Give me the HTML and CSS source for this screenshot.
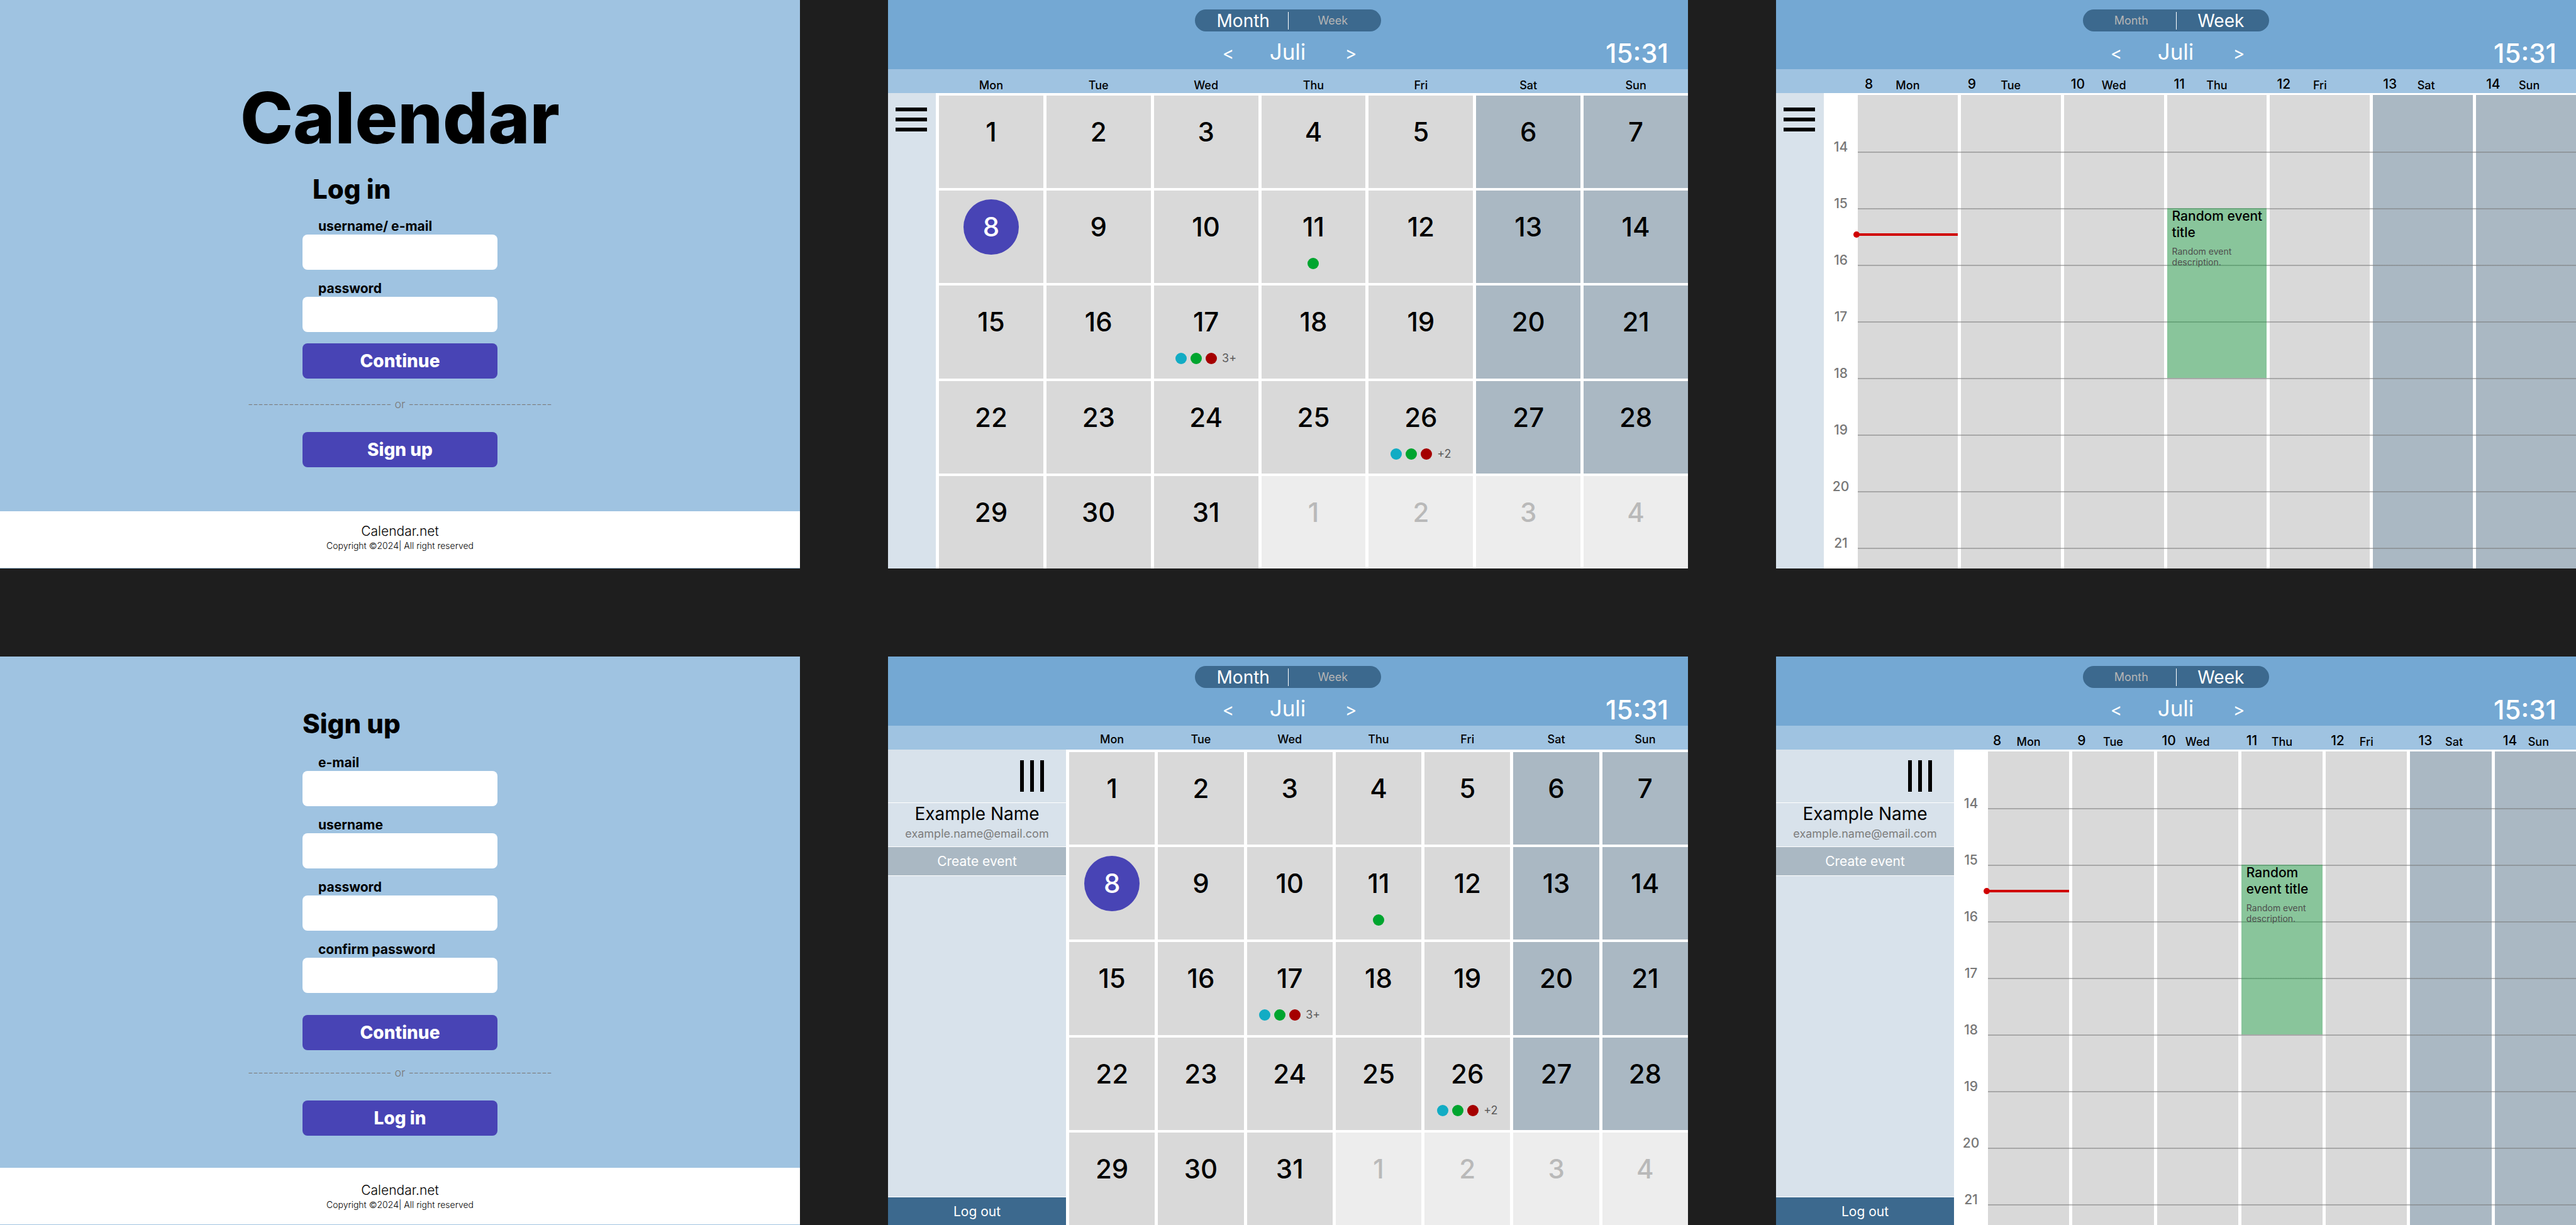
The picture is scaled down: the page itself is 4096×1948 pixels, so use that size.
FILE: index.html
```html
<!DOCTYPE html>
<html lang="en">
<head>
<meta charset="utf-8">
<meta name="viewport" content="width=device-width, initial-scale=1">
<title>Calendar</title>
<link rel="stylesheet" href="styles.css">
</head>
<body>
<main class="board">

  <section class="screen auth auth-login">
    <div class="auth-main">
      <h1 class="brand">Calendar</h1>
      <form class="auth-form">
        <h2 class="form-title form-title-inset">Log in</h2>
        <div class="field">
          <label for="login-user">username/ e-mail</label>
          <input id="login-user" type="text">
        </div>
        <div class="field">
          <label for="login-pass">password</label>
          <input id="login-pass" type="password">
        </div>
        <button class="btn" type="submit">Continue</button>
        <p class="divider">---------------------------- or ----------------------------</p>
        <button class="btn" type="button">Sign up</button>
      </form>
    </div>
    <footer class="auth-footer">
      <p class="site">Calendar.net</p>
      <p class="legal">Copyright ©2024| All right reserved</p>
    </footer>
  </section>

  <section class="screen planner">
    <header class="top">
      <div class="toggle">
        <button type="button" class="active">Month</button>
        <span class="toggle-rule"></span>
        <button type="button">Week</button>
      </div>
      <div class="top-row">
        <div class="month-nav">
          <button type="button" aria-label="Previous month">&lt;</button>
          <span class="month-name">Juli</span>
          <button type="button" aria-label="Next month">&gt;</button>
        </div>
        <time class="clock">15:31</time>
      </div>
    </header>
    <div class="body">
      <aside class="side">
        <button type="button" class="menu" aria-label="Open menu">
          <svg width="50" height="38" viewBox="0 0 50 38"><rect width="50" height="6"/><rect y="16" width="50" height="6"/><rect y="32" width="50" height="6"/></svg>
        </button>
      </aside>
      <table class="month">
        <thead><tr><th>Mon</th><th>Tue</th><th>Wed</th><th>Thu</th><th>Fri</th><th>Sat</th><th>Sun</th></tr></thead>
        <tbody>
          <tr><td><b>1</b></td><td><b>2</b></td><td><b>3</b></td><td><b>4</b></td><td><b>5</b></td><td class="we"><b>6</b></td><td class="we"><b>7</b></td></tr>
          <tr><td><b class="today">8</b></td><td><b>9</b></td><td><b>10</b></td><td><b>11</b><div class="dots"><i class="green"></i></div></td><td><b>12</b></td><td class="we"><b>13</b></td><td class="we"><b>14</b></td></tr>
          <tr><td><b>15</b></td><td><b>16</b></td><td><b>17</b><div class="dots"><i class="cyan"></i><i class="green"></i><i class="red"></i><span>3+</span></div></td><td><b>18</b></td><td><b>19</b></td><td class="we"><b>20</b></td><td class="we"><b>21</b></td></tr>
          <tr><td><b>22</b></td><td><b>23</b></td><td><b>24</b></td><td><b>25</b></td><td><b>26</b><div class="dots"><i class="cyan"></i><i class="green"></i><i class="red"></i><span>+2</span></div></td><td class="we"><b>27</b></td><td class="we"><b>28</b></td></tr>
          <tr><td><b>29</b></td><td><b>30</b></td><td><b>31</b></td><td class="next"><b>1</b></td><td class="next"><b>2</b></td><td class="next"><b>3</b></td><td class="next"><b>4</b></td></tr>
        </tbody>
      </table>
    </div>
  </section>

  <section class="screen planner">
    <header class="top">
      <div class="toggle">
        <button type="button">Month</button>
        <span class="toggle-rule"></span>
        <button type="button" class="active">Week</button>
      </div>
      <div class="top-row">
        <div class="month-nav">
          <button type="button" aria-label="Previous month">&lt;</button>
          <span class="month-name">Juli</span>
          <button type="button" aria-label="Next month">&gt;</button>
        </div>
        <time class="clock">15:31</time>
      </div>
    </header>
    <div class="body">
      <aside class="side">
        <button type="button" class="menu" aria-label="Open menu">
          <svg width="50" height="38" viewBox="0 0 50 38"><rect width="50" height="6"/><rect y="16" width="50" height="6"/><rect y="32" width="50" height="6"/></svg>
        </button>
      </aside>
      <div class="week">
        <div class="week-head">
          <div><b>8</b><span>Mon</span></div>
          <div><b>9</b><span>Tue</span></div>
          <div><b>10</b><span>Wed</span></div>
          <div><b>11</b><span>Thu</span></div>
          <div><b>12</b><span>Fri</span></div>
          <div class="we"><b>13</b><span>Sat</span></div>
          <div class="we"><b>14</b><span>Sun</span></div>
        </div>
        <div class="week-body">
          <ol class="hours"><li>14</li><li>15</li><li>16</li><li>17</li><li>18</li><li>19</li><li>20</li><li>21</li></ol>
          <div class="days">
            <div class="day"><div class="now"></div></div>
            <div class="day"></div>
            <div class="day"></div>
            <div class="day">
              <article class="event"><h3>Random event title</h3><p>Random event description.</p></article>
            </div>
            <div class="day"></div>
            <div class="day we"></div>
            <div class="day we"></div>
          </div>
        </div>
      </div>
    </div>
  </section>

  <section class="screen auth auth-signup">
    <div class="auth-main">
      <form class="auth-form">
        <h2 class="form-title">Sign up</h2>
        <div class="field">
          <label for="su-email">e-mail</label>
          <input id="su-email" type="email">
        </div>
        <div class="field">
          <label for="su-user">username</label>
          <input id="su-user" type="text">
        </div>
        <div class="field">
          <label for="su-pass">password</label>
          <input id="su-pass" type="password">
        </div>
        <div class="field">
          <label for="su-confirm">confirm password</label>
          <input id="su-confirm" type="password">
        </div>
        <button class="btn" type="submit">Continue</button>
        <p class="divider">---------------------------- or ----------------------------</p>
        <button class="btn" type="button">Log in</button>
      </form>
    </div>
    <footer class="auth-footer">
      <p class="site">Calendar.net</p>
      <p class="legal">Copyright ©2024| All right reserved</p>
    </footer>
  </section>

  <section class="screen planner open">
    <header class="top">
      <div class="toggle">
        <button type="button" class="active">Month</button>
        <span class="toggle-rule"></span>
        <button type="button">Week</button>
      </div>
      <div class="top-row">
        <div class="month-nav">
          <button type="button" aria-label="Previous month">&lt;</button>
          <span class="month-name">Juli</span>
          <button type="button" aria-label="Next month">&gt;</button>
        </div>
        <time class="clock">15:31</time>
      </div>
    </header>
    <div class="body">
      <aside class="side">
        <button type="button" class="menu" aria-label="Close menu">
          <svg width="38" height="50" viewBox="0 0 38 50"><rect width="6" height="50"/><rect x="16" width="6" height="50"/><rect x="32" width="6" height="50"/></svg>
        </button>
        <div class="profile">
          <p class="name">Example Name</p>
          <p class="mail">example.name@email.com</p>
        </div>
        <button type="button" class="create">Create event</button>
        <button type="button" class="logout">Log out</button>
      </aside>
      <table class="month">
        <thead><tr><th>Mon</th><th>Tue</th><th>Wed</th><th>Thu</th><th>Fri</th><th>Sat</th><th>Sun</th></tr></thead>
        <tbody>
          <tr><td><b>1</b></td><td><b>2</b></td><td><b>3</b></td><td><b>4</b></td><td><b>5</b></td><td class="we"><b>6</b></td><td class="we"><b>7</b></td></tr>
          <tr><td><b class="today">8</b></td><td><b>9</b></td><td><b>10</b></td><td><b>11</b><div class="dots"><i class="green"></i></div></td><td><b>12</b></td><td class="we"><b>13</b></td><td class="we"><b>14</b></td></tr>
          <tr><td><b>15</b></td><td><b>16</b></td><td><b>17</b><div class="dots"><i class="cyan"></i><i class="green"></i><i class="red"></i><span>3+</span></div></td><td><b>18</b></td><td><b>19</b></td><td class="we"><b>20</b></td><td class="we"><b>21</b></td></tr>
          <tr><td><b>22</b></td><td><b>23</b></td><td><b>24</b></td><td><b>25</b></td><td><b>26</b><div class="dots"><i class="cyan"></i><i class="green"></i><i class="red"></i><span>+2</span></div></td><td class="we"><b>27</b></td><td class="we"><b>28</b></td></tr>
          <tr><td><b>29</b></td><td><b>30</b></td><td><b>31</b></td><td class="next"><b>1</b></td><td class="next"><b>2</b></td><td class="next"><b>3</b></td><td class="next"><b>4</b></td></tr>
        </tbody>
      </table>
    </div>
  </section>

  <section class="screen planner open">
    <header class="top">
      <div class="toggle">
        <button type="button">Month</button>
        <span class="toggle-rule"></span>
        <button type="button" class="active">Week</button>
      </div>
      <div class="top-row">
        <div class="month-nav">
          <button type="button" aria-label="Previous month">&lt;</button>
          <span class="month-name">Juli</span>
          <button type="button" aria-label="Next month">&gt;</button>
        </div>
        <time class="clock">15:31</time>
      </div>
    </header>
    <div class="body">
      <aside class="side">
        <button type="button" class="menu" aria-label="Close menu">
          <svg width="38" height="50" viewBox="0 0 38 50"><rect width="6" height="50"/><rect x="16" width="6" height="50"/><rect x="32" width="6" height="50"/></svg>
        </button>
        <div class="profile">
          <p class="name">Example Name</p>
          <p class="mail">example.name@email.com</p>
        </div>
        <button type="button" class="create">Create event</button>
        <button type="button" class="logout">Log out</button>
      </aside>
      <div class="week">
        <div class="week-head">
          <div><b>8</b><span>Mon</span></div>
          <div><b>9</b><span>Tue</span></div>
          <div><b>10</b><span>Wed</span></div>
          <div><b>11</b><span>Thu</span></div>
          <div><b>12</b><span>Fri</span></div>
          <div class="we"><b>13</b><span>Sat</span></div>
          <div class="we"><b>14</b><span>Sun</span></div>
        </div>
        <div class="week-body">
          <ol class="hours"><li>14</li><li>15</li><li>16</li><li>17</li><li>18</li><li>19</li><li>20</li><li>21</li></ol>
          <div class="days">
            <div class="day"><div class="now"></div></div>
            <div class="day"></div>
            <div class="day"></div>
            <div class="day">
              <article class="event"><h3>Random event title</h3><p>Random event description.</p></article>
            </div>
            <div class="day"></div>
            <div class="day we"></div>
            <div class="day we"></div>
          </div>
        </div>
      </div>
    </div>
  </section>

</main>
</body>
</html>
```
FILE: styles.css
```css
:root {
  --backdrop: #1e1e1e;
  --header: #74a8d3;
  --band: #9fc3e1;
  --side: #d8e2eb;
  --deep: #3c698e;
  --accent: #4844b5;
  --cell: #d9d9d9;
  --weekend: #aab8c3;
}

* { box-sizing: border-box; }

body {
  margin: 0;
  background: var(--backdrop);
  color: #000;
  font-family: Inter, "Liberation Sans", sans-serif;
  font-weight: 400;
}

h1, h2, h3, p, ol { margin: 0; padding: 0; }

button {
  margin: 0;
  padding: 0;
  border: 0;
  background: none;
  color: inherit;
  font: inherit;
}

.board {
  display: grid;
  grid-template-columns: repeat(3, minmax(0, 1fr));
  grid-auto-rows: 1fr;
  gap: 140px;
  min-height: 100vh;
}

.screen {
  display: flex;
  flex-direction: column;
  overflow: hidden;
}

/* Log in and sign up */

.auth { background: var(--band); }

.auth-main {
  flex: 1;
  display: flex;
  flex-direction: column;
  align-items: center;
}

.auth-login .auth-main { padding-top: 119px; }
.auth-signup .auth-main { padding-top: 82px; }

.brand {
  margin-bottom: 21px;
  font-size: 113px;
  line-height: 136px;
  font-weight: 800;
}

.auth-form {
  display: flex;
  flex-direction: column;
  width: 310px;
}

.form-title {
  margin-bottom: 24px;
  font-size: 42px;
  line-height: 50px;
  font-weight: 800;
}

.form-title-inset {
  margin-bottom: 21px;
  padding-left: 16px;
}

.field {
  display: flex;
  flex-direction: column;
  margin-bottom: 17px;
}

.field label {
  padding-left: 25px;
  font-size: 21px;
  line-height: 26px;
  font-weight: 700;
}

.field input {
  height: 56px;
  padding: 0 16px;
  border: 0;
  border-radius: 8px;
  background: #fff;
  font: inherit;
  font-size: 21px;
}

.btn {
  height: 56px;
  margin-top: 1px;
  border-radius: 8px;
  background: var(--accent);
  color: #fff;
  font-size: 28px;
  font-weight: 800;
}

.auth-signup .field + .btn { margin-top: 18px; }

.divider {
  align-self: center;
  margin: 30px 0 32px;
  color: #7a7a7a;
  font-size: 18px;
  line-height: 22px;
  font-weight: 300;
  white-space: nowrap;
}

.auth-signup .divider { margin-top: 25px; }

.auth-footer {
  height: 90px;
  margin-bottom: 1px;
  padding-top: 19px;
  background: #fff;
  text-align: center;
  font-weight: 300;
}

.auth-signup .auth-footer { padding-top: 23px; }

.site {
  font-size: 21px;
  line-height: 26px;
}

.legal {
  font-size: 14px;
  line-height: 20px;
}

/* Planner header */

.planner { background: #fff; }

.top {
  padding-top: 15px;
  background: var(--header);
  color: #fff;
}

.toggle {
  display: grid;
  grid-template-columns: 1fr 1px 1fr;
  align-items: center;
  width: 296px;
  height: 35px;
  margin: 0 auto 10px;
  padding: 0 6px;
  border-radius: 18px;
  background: var(--deep);
}

.toggle button {
  color: #b5b5b5;
  font-size: 18px;
  line-height: 34px;
}

.toggle .active {
  color: #fff;
  font-size: 28px;
}

.toggle-rule {
  height: 28px;
  background: #fff;
}

.top-row {
  display: grid;
  grid-template-columns: 1fr 228px 1fr;
  align-items: center;
}

.month-nav {
  display: flex;
  grid-column: 2;
  justify-content: space-between;
  align-items: baseline;
  padding: 0 0 4px 5px;
  line-height: 42px;
}

.month-nav button {
  width: 28px;
  font-size: 28px;
}

.month-name {
  padding-right: 6px;
  font-size: 35px;
}

.clock {
  justify-self: end;
  padding-right: 31px;
  font-size: 42px;
  line-height: 50px;
  font-weight: 500;
}

/* Side panel */

.body {
  flex: 1;
  display: flex;
  background: var(--band);
}

.side {
  display: flex;
  flex-direction: column;
  flex: none;
  width: 76px;
  margin-top: 38px;
  background: var(--side);
}

.menu {
  display: flex;
  padding: 23px 0 0 12px;
}

.menu svg { display: block; }

.open .side { width: 283px; }

.open .menu {
  justify-content: flex-end;
  height: 85px;
  padding: 17px 35px 0 0;
  border-bottom: 1px solid #fff;
}

.profile {
  height: 70px;
  border-bottom: 1px solid #fff;
  text-align: center;
}

.name {
  margin-bottom: 4px;
  font-size: 28px;
  line-height: 34px;
}

.mail {
  color: #7d7d7d;
  font-size: 18px;
  line-height: 22px;
}

.create,
.logout {
  color: #fff;
  font-size: 21px;
}

.create {
  height: 46px;
  border-bottom: 1px solid #fff;
  background: var(--weekend);
}

.logout {
  height: 45px;
  margin-top: auto;
  border-top: 1px solid #fff;
  background: var(--deep);
}

/* Month view */

.month {
  flex: 1;
  display: flex;
  flex-direction: column;
}

.month thead { display: block; }

.month thead tr {
  display: grid;
  grid-template-columns: repeat(7, 1fr);
  gap: 5px;
  align-items: end;
  height: 38px;
  padding: 0 0 1px 5px;
}

.open .month thead tr { padding-bottom: 5px; }

.month th {
  padding: 0;
  font-size: 18px;
  line-height: 22px;
  font-weight: 500;
}

.month tbody {
  flex: 1;
  display: grid;
  grid-template-columns: repeat(7, 1fr);
  grid-template-rows: repeat(5, 1fr);
  gap: 4px 5px;
  padding: 4px 0 0 5px;
  background: #fff;
}

.month tbody tr { display: contents; }

.month td {
  display: flex;
  flex-direction: column;
  align-items: center;
  padding: 14px 0 0;
  background: var(--cell);
}

.month td b {
  width: 88px;
  font-size: 42px;
  line-height: 88px;
  font-weight: 500;
  text-align: center;
}

.month .we { background: var(--weekend); }

.month .next {
  background: #ededed;
  color: #b9b9b9;
}

.month .today {
  border-radius: 50%;
  background: var(--accent);
  color: #fff;
}

.dots {
  display: flex;
  align-items: center;
  gap: 6px;
  height: 18px;
  margin-top: 5px;
}

.dots i {
  width: 18px;
  height: 18px;
  border-radius: 50%;
}

.dots span {
  padding-left: 2px;
  color: #5c5c5c;
  font-size: 18px;
  line-height: 18px;
}

.cyan { background: #12acc4; }
.green { background: #00a52f; }
.red { background: #a50000; }

/* Week view */

.week {
  flex: 1;
  display: flex;
  flex-direction: column;
}

.week-head,
.days {
  display: grid;
  grid-template-columns: repeat(7, minmax(0, 1fr));
  gap: 5px;
}

.week-head {
  height: 38px;
  padding: 0 0 1px 54px;
  font-weight: 500;
}

.week-head div {
  display: grid;
  grid-template-columns: 1fr auto 1fr;
  align-items: end;
}

.week-head .we {
  margin: 0 -5px 0 5px;
}

.week-head b {
  padding-left: 11px;
  font-size: 21px;
  line-height: 26px;
  font-weight: 500;
}

.open .week-head b { padding-left: 8px; }

.week-head span {
  grid-column: 2;
  font-size: 18px;
  line-height: 22px;
}

.week-body {
  flex: 1;
  display: flex;
  padding-top: 3px;
  background: #fff;
}

.hours {
  width: 54px;
  padding-top: 6px;
  list-style: none;
  color: #777;
  font-size: 21px;
  line-height: 26px;
  font-weight: 500;
  text-align: center;
}

.hours li {
  display: flex;
  align-items: flex-end;
  justify-content: center;
  height: 90px;
}

.days {
  position: relative;
  flex: 1;
}

/* Hour rules run across every day, under the events */
.days::after {
  content: "";
  position: absolute;
  inset: 90px 0 0;
  background: linear-gradient(rgba(118, 118, 118, 0.5) 2px, transparent 2px) 0 0 / 100% 90px;
}

.day {
  position: relative;
  display: grid;
  grid-template-rows: repeat(8, 90px);
  background: var(--cell);
}

.day.we { background: var(--weekend); }

.event {
  position: relative;
  z-index: 2;
  grid-row: 3 / span 3;
  padding-left: 8px;
  background: rgba(0, 163, 49, 0.37);
}

.event h3 {
  margin-bottom: 8px;
  font-size: 21px;
  line-height: 26px;
  font-weight: 500;
}

.event p {
  color: #4d4d4d;
  font-size: 14px;
  line-height: 17px;
}

.now {
  position: absolute;
  z-index: 2;
  top: 220px;
  left: 0;
  right: 0;
  height: 4px;
  background: #d00000;
}

.now::before {
  content: "";
  position: absolute;
  top: -3px;
  left: -7px;
  width: 10px;
  height: 10px;
  border-radius: 50%;
  background: #d00000;
}
```
